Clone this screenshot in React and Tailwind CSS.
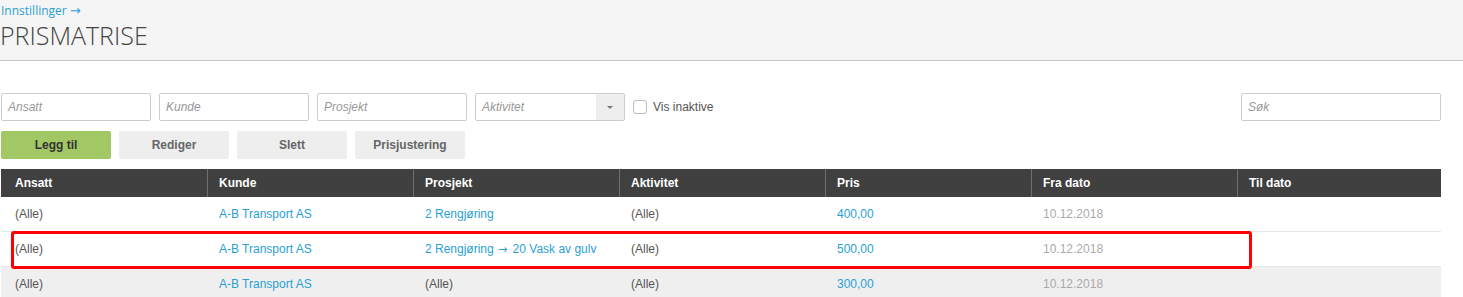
import React from "react";

const cols = ["Ansatt", "Kunde", "Prosjekt", "Aktivitet", "Pris", "Fra dato", "Til dato"];

const rows = [
  { a: "(Alle)", k: "A-B Transport AS", p: ["2 Rengjøring"], pLink: true, akt: "(Alle)", pris: "400,00", fra: "10.12.2018", bg: "bg-white" },
  { a: "(Alle)", k: "A-B Transport AS", p: ["2 Rengjøring", "20 Vask av gulv"], pLink: true, akt: "(Alle)", pris: "500,00", fra: "10.12.2018", bg: "bg-white" },
  { a: "(Alle)", k: "A-B Transport AS", p: ["(Alle)"], pLink: false, akt: "(Alle)", pris: "300,00", fra: "10.12.2018", bg: "bg-[#efefef]" },
];

const grid = "grid grid-cols-[206px_206px_206px_206px_206px_206px_204px]";

function Input({ ph, w = "w-[150px]" }) {
  return (
    <div className={`${w} h-[28px] border border-[#cccccc] bg-white rounded-[2px] flex items-center px-[6px] text-[12px] italic text-[#999]`}>
      {ph}
    </div>
  );
}

export default function App() {
  return (
    <div className="relative w-[1463px] h-[297px] overflow-hidden bg-white font-['Liberation_Sans',Arial,sans-serif]">
      <header className="h-[61px] bg-[#f5f5f5] border-b border-[#c6c6c6] pl-px">
        <div className="pt-px h-[20px] text-[12px] leading-[20px] text-[#2a9fd6] font-['Open_Sans',sans-serif]">
          Innstillinger <span className="font-['DejaVu_Sans',sans-serif] text-[13px]">→</span>
        </div>
        <div className="-ml-px text-[25px] leading-[30px] text-[#444] font-['Open_Sans',sans-serif] font-light">
          PRISMATRISE
        </div>
      </header>

      <div className="pl-px w-[1441px] pt-[32px]">
        <div className="flex items-center h-[28px]">
          <div className="flex gap-[8px]">
            <Input ph="Ansatt" />
            <Input ph="Kunde" />
            <Input ph="Prosjekt" />
            <div className="w-[150px] h-[28px] border border-[#cccccc] bg-white rounded-[2px] flex items-stretch text-[12px] italic text-[#999]">
              <div className="flex-1 flex items-center px-[6px]">Aktivitet</div>
              <div className="w-[28px] bg-[#eeeeee] flex items-center justify-center">
                <span className="block w-0 h-0 border-l-[3px] border-r-[3px] border-t-[3px] border-l-transparent border-r-transparent border-t-[#777]" />
              </div>
            </div>
          </div>
          <div className="ml-[8px] w-[14px] h-[14px] border border-[#bbb] rounded-[3px] bg-white" />
          <span className="ml-[6px] text-[12px] text-[#555]">Vis inaktive</span>
          <div className="ml-auto">
            <Input ph="Søk" w="w-[200px]" />
          </div>
        </div>

        <div className="flex gap-[8px] mt-[10px]">
          <button className="w-[110px] h-[28px] rounded-[2px] bg-[#a2c865] text-[12px] font-bold text-[#333]">Legg til</button>
          <button className="w-[110px] h-[28px] rounded-[2px] bg-[#eeeeee] text-[12px] font-bold text-[#666]">Rediger</button>
          <button className="w-[110px] h-[28px] rounded-[2px] bg-[#eeeeee] text-[12px] font-bold text-[#666]">Slett</button>
          <button className="w-[110px] h-[28px] rounded-[2px] bg-[#eeeeee] text-[12px] font-bold text-[#666]">Prisjustering</button>
        </div>

        <div className="mt-[10px] w-[1440px]">
          <div className={`${grid} h-[28px] bg-[#404040] text-white text-[12px] font-bold`}>
            {cols.map((c, i) => (
              <div key={c} className={`flex items-center ${i > 0 ? "border-l border-[#6e6e6e] pl-[11px]" : "pl-[14px]"}`}>
                {c}
              </div>
            ))}
          </div>
          {rows.map((r, i) => (
            <div key={i} className={`${grid} h-[35px] text-[12px] border-b border-[#e6e6e6] ${r.bg}`}>
              <div className="flex items-center pl-[14px] text-[#555]">{r.a}</div>
              <div className="flex items-center pl-[12px] text-[#2a9fd6]">{r.k}</div>
              <div className="flex items-center pl-[12px] whitespace-nowrap">
                <span className={r.pLink ? "text-[#2a9fd6]" : "text-[#555]"}>
                  {r.p[0]}
                  {r.p[1] && (
                    <>
                      {" "}
                      <span className="font-['DejaVu_Sans',sans-serif] text-[11px] ml-[1px] mr-[2px]">→</span>
                      {" "}
                      {r.p[1]}
                    </>
                  )}
                </span>
              </div>
              <div className="flex items-center pl-[12px] text-[#555]">{r.akt}</div>
              <div className="flex items-center pl-[12px] text-[#2a9fd6]">{r.pris}</div>
              <div className="flex items-center pl-[12px] text-[#aaa]">{r.fra}</div>
              <div />
            </div>
          ))}
        </div>
      </div>

      <div className="absolute left-[11px] top-[231px] w-[1241px] h-[38px] border-[3px] border-[#ff0000] rounded-[3px]" />
    </div>
  );
}
